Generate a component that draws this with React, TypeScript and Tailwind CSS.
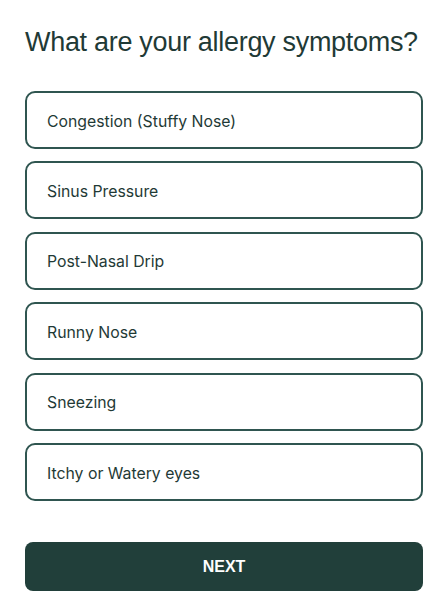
const options = [
  "Congestion (Stuffy Nose)",
  "Sinus Pressure",
  "Post-Nasal Drip",
  "Runny Nose",
  "Sneezing",
  "Itchy or Watery eyes",
];

export default function App() {
  return (
    <div className="min-h-screen bg-white pl-[25px] pr-[23px] pt-[24px] font-['Inter',sans-serif]">
      <h1 className="whitespace-nowrap font-['Liberation_Sans',sans-serif] text-[27px] leading-[36px] tracking-[-0.3px] text-[#1f3a36]">
        What are your allergy symptoms?
      </h1>

      <div className="mt-[31px] flex flex-col gap-[12.4px]">
        {options.map((label) => (
          <button
            key={label}
            className="flex h-[58px] w-full items-center rounded-[10px] border-2 border-[#2f5550] bg-white px-[20px] pt-[3px] text-left text-[15.8px] text-[#1f3a36]"
          >
            {label}
          </button>
        ))}
      </div>

      <button className="mt-[41px] flex h-[49px] w-full items-center justify-center rounded-[8px] bg-[#213f3a] pt-[2px] font-['Liberation_Sans',sans-serif] text-[16px] font-bold text-white">
        NEXT
      </button>
    </div>
  );
}
